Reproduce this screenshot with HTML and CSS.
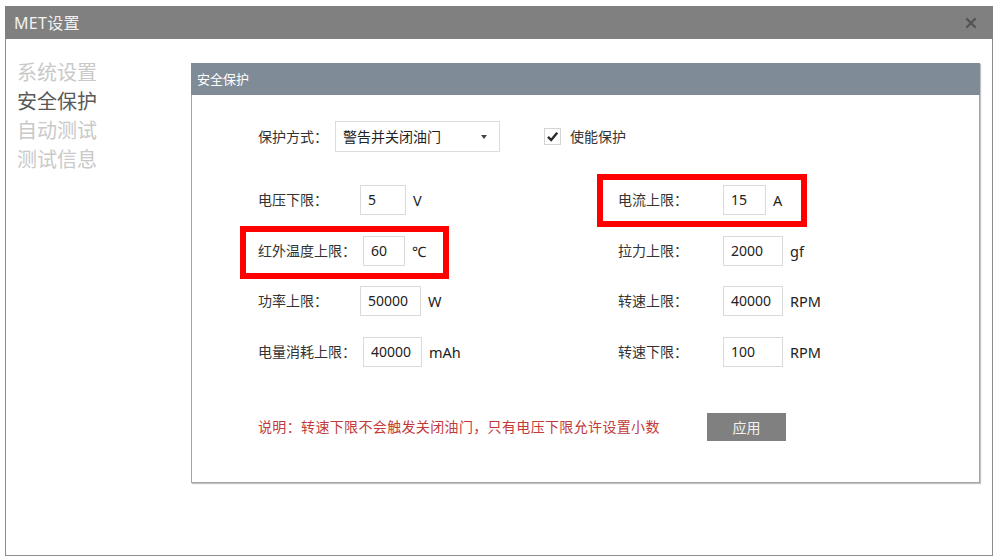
FILE: index.html
```html
<!DOCTYPE html>
<html lang="zh-CN">
<head>
<meta charset="utf-8">
<title>MET设置</title>
<link rel="stylesheet" href="styles.css">
</head>
<body>
<div class="window">
  <div class="titlebar">
    <span class="title">MET设置</span>
    <span class="close">
      <svg width="12" height="12" viewBox="0 0 12 12"><path d="M2 2 L10 10 M10 2 L2 10" stroke="#545454" stroke-width="2.4" stroke-linecap="round"/></svg>
    </span>
  </div>
  <div class="content">
    <nav class="nav">
      <div class="nav-item">系统设置</div>
      <div class="nav-item active">安全保护</div>
      <div class="nav-item">自动测试</div>
      <div class="nav-item">测试信息</div>
    </nav>
    <section class="panel">
      <div class="panel-header">安全保护</div>
      <div class="panel-body">
        <div class="row-top">
          <span class="top-label">保护方式：</span>
          <div class="select"><span>警告并关闭油门</span><span class="arrow"></span></div>
          <div class="check">
            <span class="box"><svg width="15" height="15" viewBox="0 0 15 15"><path d="M3 7.8 L6.2 11 L12.2 3.8" fill="none" stroke="#2b2b2b" stroke-width="2.4"/></svg></span>
            <span>使能保护</span>
          </div>
        </div>
        <div class="grid">
          <div class="field left"><span class="label">电压下限：</span><span class="input w46">5</span><span class="unit">V</span></div>
          <div class="field right"><span class="label">电流上限：</span><span class="input w43">15</span><span class="unit">A</span></div>
          <div class="field left"><span class="label">红外温度上限：</span><span class="input w42 shift">60</span><span class="unit">℃</span></div>
          <div class="field right"><span class="label">拉力上限：</span><span class="input w60">2000</span><span class="unit">gf</span></div>
          <div class="field left"><span class="label">功率上限：</span><span class="input w61">50000</span><span class="unit">W</span></div>
          <div class="field right"><span class="label">转速上限：</span><span class="input w60">40000</span><span class="unit">RPM</span></div>
          <div class="field left"><span class="label">电量消耗上限：</span><span class="input w59 shift">40000</span><span class="unit">mAh</span></div>
          <div class="field right"><span class="label">转速下限：</span><span class="input w60">100</span><span class="unit">RPM</span></div>
        </div>
        <div class="note-row">
          <span class="note">说明：转速下限不会触发关闭油门，只有电压下限允许设置小数</span>
          <button class="apply">应用</button>
        </div>
      </div>
      <div class="mark mark-left"></div>
      <div class="mark mark-right"></div>
    </section>
  </div>
</div>
</body>
</html>
```

FILE: styles.css
```css
* { box-sizing: border-box; }

html, body {
  margin: 0;
  padding: 0;
  background: #ffffff;
}

body {
  font-family: "Noto Sans", "Noto Sans CJK SC", sans-serif;
  color: #333333;
}

.window {
  margin: 6px 0 0 5px;
  width: 988px;
  height: 550px;
  border: 1px solid #8c8c8c;
  border-top: none;
  display: flex;
  flex-direction: column;
  background: #ffffff;
}

.titlebar {
  height: 33px;
  margin: 0 -1px;
  background: #808080;
  display: flex;
  align-items: center;
  justify-content: space-between;
  padding: 0 16px 0 9px;
}

.title {
  color: #f2f2f2;
  font-size: 16px;
  line-height: 20px;
  letter-spacing: 0.3px;
}

.close {
  display: flex;
  align-items: center;
}

.content {
  flex: 1;
  display: flex;
}

.nav {
  width: 185px;
  padding: 18px 0 0 11px;
}

.nav-item {
  font-size: 20px;
  line-height: 29px;
  color: #c9c9c9;
  font-family: "Noto Sans CJK SC", sans-serif;
}

.nav-item.active {
  color: #5a5a5a;
}

.panel {
  position: relative;
  margin-top: 24px;
  width: 789px;
  height: 420px;
  border: 1px solid #a4a4a4;
  border-top: none;
  box-shadow: 1px 1px 1px #c4c4c4;
}

.panel-header {
  height: 32px;
  margin: 0 -1px;
  background: #7f8c98;
  color: #ffffff;
  font-size: 13px;
  line-height: 32px;
  padding-left: 6px;
  font-family: "Noto Sans CJK SC", sans-serif;
}

.panel-body {
  padding: 26px 0 0 66px;
  font-size: 14px;
}

.row-top {
  display: flex;
  align-items: center;
  height: 31px;
}

.top-label {
  width: 77px;
  line-height: 20px;
}

.select {
  width: 165px;
  height: 31px;
  border: 1px solid #dcdcdc;
  display: flex;
  align-items: center;
  justify-content: space-between;
  padding: 0 12px 0 7px;
  color: #222222;
  line-height: 20px;
}

.arrow {
  width: 0;
  height: 0;
  border-left: 3.5px solid transparent;
  border-right: 3.5px solid transparent;
  border-top: 4px solid #444444;
}

.check {
  margin-left: 44px;
  display: flex;
  align-items: center;
  gap: 9px;
  line-height: 20px;
}

.box {
  width: 17px;
  height: 17px;
  border: 1px solid #d4d4d4;
  display: flex;
  align-items: center;
  justify-content: center;
}

.grid {
  margin-top: 33px;
  display: grid;
  grid-template-columns: 360px 1fr;
  grid-auto-rows: 30px;
  row-gap: 20.5px;
}

.field {
  display: flex;
  align-items: center;
}

.label {
  line-height: 20px;
  color: #333333;
}

.left .label { width: 102px; }
.right .label { width: 105px; }

.input {
  height: 30px;
  border: 1px solid #dadada;
  padding-left: 7px;
  display: flex;
  align-items: center;
  color: #222222;
  line-height: 20px;
}

.input.shift { margin-left: 3px; }

.w42 { width: 42px; }
.w43 { width: 43px; }
.w46 { width: 46px; }
.w59 { width: 59px; }
.w60 { width: 60px; }
.w61 { width: 61px; }

.unit {
  margin-left: 7px;
  color: #222222;
  line-height: 20px;
  font-size: 14.5px;
}

.note-row {
  margin-top: 46px;
  width: 528px;
  height: 28px;
  display: flex;
  align-items: center;
  justify-content: space-between;
}

.note {
  color: #c23a3a;
  line-height: 20px;
  letter-spacing: 0.35px;
}

.apply {
  width: 79px;
  height: 28px;
  border: none;
  background: #808080;
  color: #f2f2f2;
  font-family: "Noto Sans CJK SC", sans-serif;
  font-size: 14px;
  padding: 0;
}

.mark {
  position: absolute;
  border: 6px solid #ff0000;
  pointer-events: none;
}

.mark-left {
  left: 48px;
  top: 163px;
  width: 209px;
  height: 53px;
}

.mark-right {
  left: 405px;
  top: 111px;
  width: 210px;
  height: 53px;
}
```
